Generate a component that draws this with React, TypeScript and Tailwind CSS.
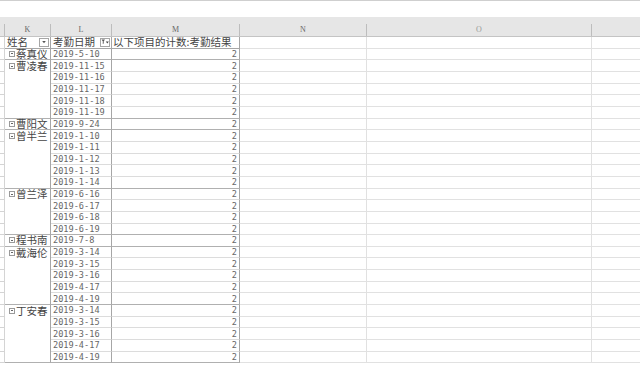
import React from 'react';

type Group = { name: string; dates: string[] };

const groups: Group[] = [
  { name: '蔡真仪', dates: ['2019-5-10'] },
  { name: '曹凌春', dates: ['2019-11-15', '2019-11-16', '2019-11-17', '2019-11-18', '2019-11-19'] },
  { name: '曹阳文', dates: ['2019-9-24'] },
  { name: '曾半兰', dates: ['2019-1-10', '2019-1-11', '2019-1-12', '2019-1-13', '2019-1-14'] },
  { name: '曾兰泽', dates: ['2019-6-16', '2019-6-17', '2019-6-18', '2019-6-19'] },
  { name: '程书南', dates: ['2019-7-8'] },
  { name: '戴海伦', dates: ['2019-3-14', '2019-3-15', '2019-3-16', '2019-4-17', '2019-4-19'] },
  { name: '丁安春', dates: ['2019-3-14', '2019-3-15', '2019-3-16', '2019-4-17', '2019-4-19'] },
];

const cjk = "font-['Noto_Sans_CJK_SC',sans-serif]";
const mono = "font-['DejaVu_Sans_Mono',monospace]";

function CollapseBox() {
  return (
    <span className="mr-[1px] ml-[4px] flex h-[6px] w-[6px] shrink-0 items-center justify-center border border-[#9a9a9a] bg-white">
      <span className="h-[1px] w-[2px] bg-[#666]" />
    </span>
  );
}

function DropButton({ filter }: { filter?: boolean }) {
  return (
    <span className="ml-auto mr-[1px] flex h-[9px] w-[10px] shrink-0 items-center justify-center border border-[#a6a6a6] bg-white">
      <svg width="8" height="6" viewBox="0 0 8 6">
        {filter ? (
          <>
            <path d="M0.5 0.5h3.5l-1.3 1.8v2.2l-0.9 0.6v-2.8z" fill="#555" />
            <path d="M4.8 2.5h3l-1.5 2z" fill="#444" />
          </>
        ) : (
          <path d="M2.2 2h3.6l-1.8 2.2z" fill="#555" />
        )}
      </svg>
    </span>
  );
}

function GridTail() {
  return (
    <>
      <div className="h-full w-[127px] border-b border-r border-[#e1e1e1]" />
      <div className="h-full w-[225px] border-b border-r border-[#e1e1e1]" />
      <div className="h-full flex-1 border-b border-[#e1e1e1]" />
    </>
  );
}

export default function App() {
  const rows: { name?: string; date: string; last: boolean }[] = [];
  groups.forEach((g) => {
    g.dates.forEach((d, i) => {
      rows.push({ name: i === 0 ? g.name : undefined, date: d, last: i === g.dates.length - 1 });
    });
  });

  return (
    <div className="h-[367px] w-[640px] overflow-hidden bg-white text-[#444]">
      <div className="h-[1px] bg-[#cfcfcf]" />
      <div className="h-[16px] bg-white" />

      {/* column headers */}
      <div className="flex h-[20px] flex-col border-b border-[#c4c4c4] bg-[#e6e6e6]">
        <div className="h-[7px]" />
        <div className="flex flex-1 items-center font-['Liberation_Serif',serif] text-[8px] leading-none text-[#666]">
          <div className="h-full w-[5px] border-r border-[#bdbdbd]" />
          <div className="flex h-full w-[46px] items-center justify-center border-r border-[#bdbdbd]">K</div>
          <div className="flex h-full w-[61px] items-center justify-center border-r border-[#bdbdbd]">L</div>
          <div className="flex h-full w-[128px] items-center justify-center border-r border-[#bdbdbd]">M</div>
          <div className="flex h-full w-[127px] items-center justify-center border-r border-[#bdbdbd]">N</div>
          <div className="flex h-full w-[225px] items-center justify-center border-r border-[#bdbdbd] text-[#999]">O</div>
          <div className="h-full flex-1" />
        </div>
      </div>

      {/* pivot header row */}
      <div className={`flex h-[11.67px] whitespace-nowrap text-[10.5px] leading-[10px] text-[#444] ${cjk}`}>
        <div className="h-full w-[5px] border-b border-r border-[#d4d4d4]" />
        <div className="flex h-full w-[46px] items-center border-b border-r border-[#a6a6a6] pl-[2px]">
          姓名
          <DropButton />
        </div>
        <div className="flex h-full w-[61px] items-center border-b border-r border-[#a6a6a6] pl-[2px]">
          考勤日期
          <DropButton filter />
        </div>
        <div className="flex h-full w-[128px] items-center border-b border-r border-[#a6a6a6] pl-[1px]">
          以下项目的计数:考勤结果
        </div>
        <GridTail />
      </div>

      {rows.map((r, i) => (
        <div key={i} className="flex h-[11.67px] whitespace-nowrap leading-[10px]">
          <div className="h-full w-[5px] border-b border-r border-[#d4d4d4]" />
          <div
            className={`flex h-full w-[46px] items-center border-r border-[#a6a6a6] text-[10.5px] text-[#444] ${cjk} ${
              r.last ? 'border-b border-b-[#b0b0b0]' : ''
            }`}
          >
            {r.name && (
              <>
                <CollapseBox />
                {r.name}
              </>
            )}
          </div>
          <div
            className={`flex h-full w-[61px] items-center border-b border-r border-r-[#a6a6a6] pl-[2px] text-[8.6px] text-[#666] ${mono} ${
              r.last ? 'border-b-[#b0b0b0]' : 'border-b-[#dcdcdc]'
            }`}
          >
            {r.date}
          </div>
          <div
            className={`flex h-full w-[128px] items-center justify-end border-b border-r border-r-[#a6a6a6] pr-[2px] text-[8.6px] text-[#666] ${mono} ${
              r.last ? 'border-b-[#b0b0b0]' : 'border-b-[#dcdcdc]'
            }`}
          >
            2
          </div>
          <GridTail />
        </div>
      ))}
    </div>
  );
}
